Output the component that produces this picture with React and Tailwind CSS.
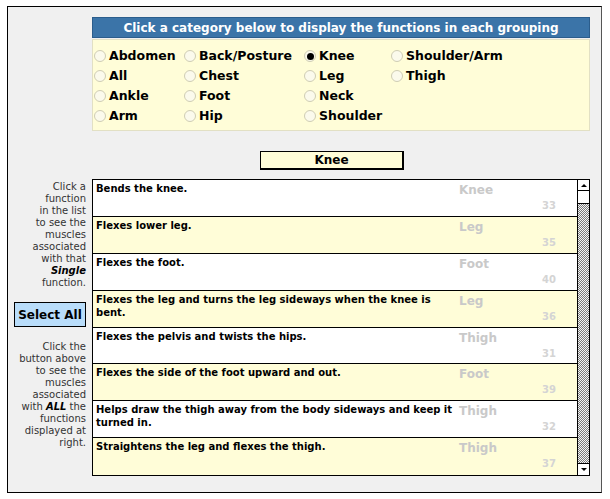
import React, { useState } from "react";

const FONT = "font-['DejaVu_Sans',Verdana,sans-serif]";

const categories = [
  ["Abdomen", "Back/Posture", "Knee", "Shoulder/Arm"],
  ["All", "Chest", "Leg", "Thigh"],
  ["Ankle", "Foot", "Neck", null],
  ["Arm", "Hip", "Shoulder", null],
];

const functions = [
  { text: "Bends the knee.", group: "Knee", id: 33 },
  { text: "Flexes lower leg.", group: "Leg", id: 35 },
  { text: "Flexes the foot.", group: "Foot", id: 40 },
  { text: "Flexes the leg and turns the leg sideways when the knee is bent.", group: "Leg", id: 36 },
  { text: "Flexes the pelvis and twists the hips.", group: "Thigh", id: 31 },
  { text: "Flexes the side of the foot upward and out.", group: "Foot", id: 39 },
  { text: "Helps draw the thigh away from the body sideways and keep it turned in.", group: "Thigh", id: 32 },
  { text: "Straightens the leg and flexes the thigh.", group: "Thigh", id: 37 },
];

function Radio({ checked }) {
  return (
    <span className="w-[12px] h-[12px] rounded-full border border-[#cfcdb4] bg-[#fbfaec] flex items-center justify-center shrink-0">
      {checked && <span className="w-[7px] h-[7px] rounded-full bg-black" />}
    </span>
  );
}

function Scrollbar() {
  return (
    <div className="w-[12px] border-l border-black flex flex-col bg-white">
      <div className="h-[11px] border-b border-black flex items-center justify-center">
        <span className="w-0 h-0 border-l-[3px] border-r-[3px] border-b-[3px] border-l-transparent border-r-transparent border-b-black" />
      </div>
      <div className="h-[13px] bg-white border-b border-black" />
      <div className="flex-1 bg-[repeating-conic-gradient(#7a7a7a_0_25%,#f4f4f4_0_50%)] bg-size-[2px_2px]" />
      <div className="h-[12px] border-t border-black flex items-center justify-center">
        <span className="w-0 h-0 border-l-[3px] border-r-[3px] border-t-[3px] border-l-transparent border-r-transparent border-t-black" />
      </div>
    </div>
  );
}

export default function App() {
  const [selected, setSelected] = useState("Knee");

  return (
    <div className={`w-[610px] h-[499px] bg-white pt-[6px] pl-[7px] ${FONT}`}>
      <div className="w-[595px] h-[487px] border border-black border-r-[#555] bg-[#f0f0f0] pt-[10px]">
        {/* category picker */}
        <div className="ml-[84px] w-[498px]">
          <div className="h-[21px] bg-[#3b74a8] border border-[#2b5d8c] text-white font-bold text-[12px] flex items-center justify-center">
            Click a category below to display the functions in each grouping
          </div>
          <div className="mt-[1px] h-[92px] bg-[#fffdd8] border border-[#e2e0c4] pt-[6px] pl-[1px]">
            {categories.map((row, r) => (
              <div key={r} className="grid grid-cols-[90px_120px_87px_1fr] h-[20px]">
                {row.map((c, i) =>
                  c ? (
                    <label
                      key={i}
                      onClick={() => setSelected(c)}
                      className="flex items-center gap-[3px] text-[12.5px] font-bold text-black cursor-pointer"
                    >
                      <Radio checked={selected === c} />
                      {c}
                    </label>
                  ) : (
                    <span key={i} />
                  )
                )}
              </div>
            ))}
          </div>
        </div>

        {/* selected category */}
        <div className="mt-[20px] ml-[252px] w-[144px] h-[19px] bg-[#fffdd8] border border-black border-r-2 border-b-2 flex items-center justify-center text-[12px] font-bold text-black">
          {selected}
        </div>

        <div className="mt-[9px] flex">
          {/* help column */}
          <div className="ml-[6px] w-[72px] text-right text-[10px] leading-[12px] text-[#333] pt-[2px]">
            <p>
              Click a<br />function<br />in the list<br />to see the<br />muscles<br />associated<br />with that<br />
              <b className="italic text-black">Single</b>
              <br />function.
            </p>
            <button className="mt-[13px] w-[72px] h-[25px] bg-[#b9ddfa] border border-black text-[12px] font-bold text-black">
              Select All
            </button>
            <p className="mt-[14px]">
              Click the<br />button above<br />to see the<br />muscles<br />associated<br />with <b className="italic text-black">ALL</b> the<br />functions<br />displayed at<br />right.
            </p>
          </div>

          {/* function list */}
          <div className="ml-[6px] w-[498px] h-[297px] border border-black flex">
            <div className="flex-1 flex flex-col">
              {functions.map((f, i) => (
                <div
                  key={f.id}
                  className={`h-[37px] flex ${i < functions.length - 1 ? "border-b border-black" : ""} ${
                    i % 2 ? "bg-[#fffdd8]" : "bg-white"
                  }`}
                >
                  <div className="w-[366px] pl-[3px] pt-[2px] text-[10px] leading-[13px] font-bold text-black">
                    {f.text}
                  </div>
                  <div className="flex-1 flex flex-col pr-[21px]">
                    <span className="text-[12px] font-bold text-[#c9c9c9] leading-[16px] pt-[2px]">{f.group}</span>
                    <span className="self-end text-[10px] font-bold text-[#d4d4d4] leading-[12px] mt-[2px]">{f.id}</span>
                  </div>
                </div>
              ))}
            </div>
            <Scrollbar />
          </div>
        </div>
      </div>
    </div>
  );
}
